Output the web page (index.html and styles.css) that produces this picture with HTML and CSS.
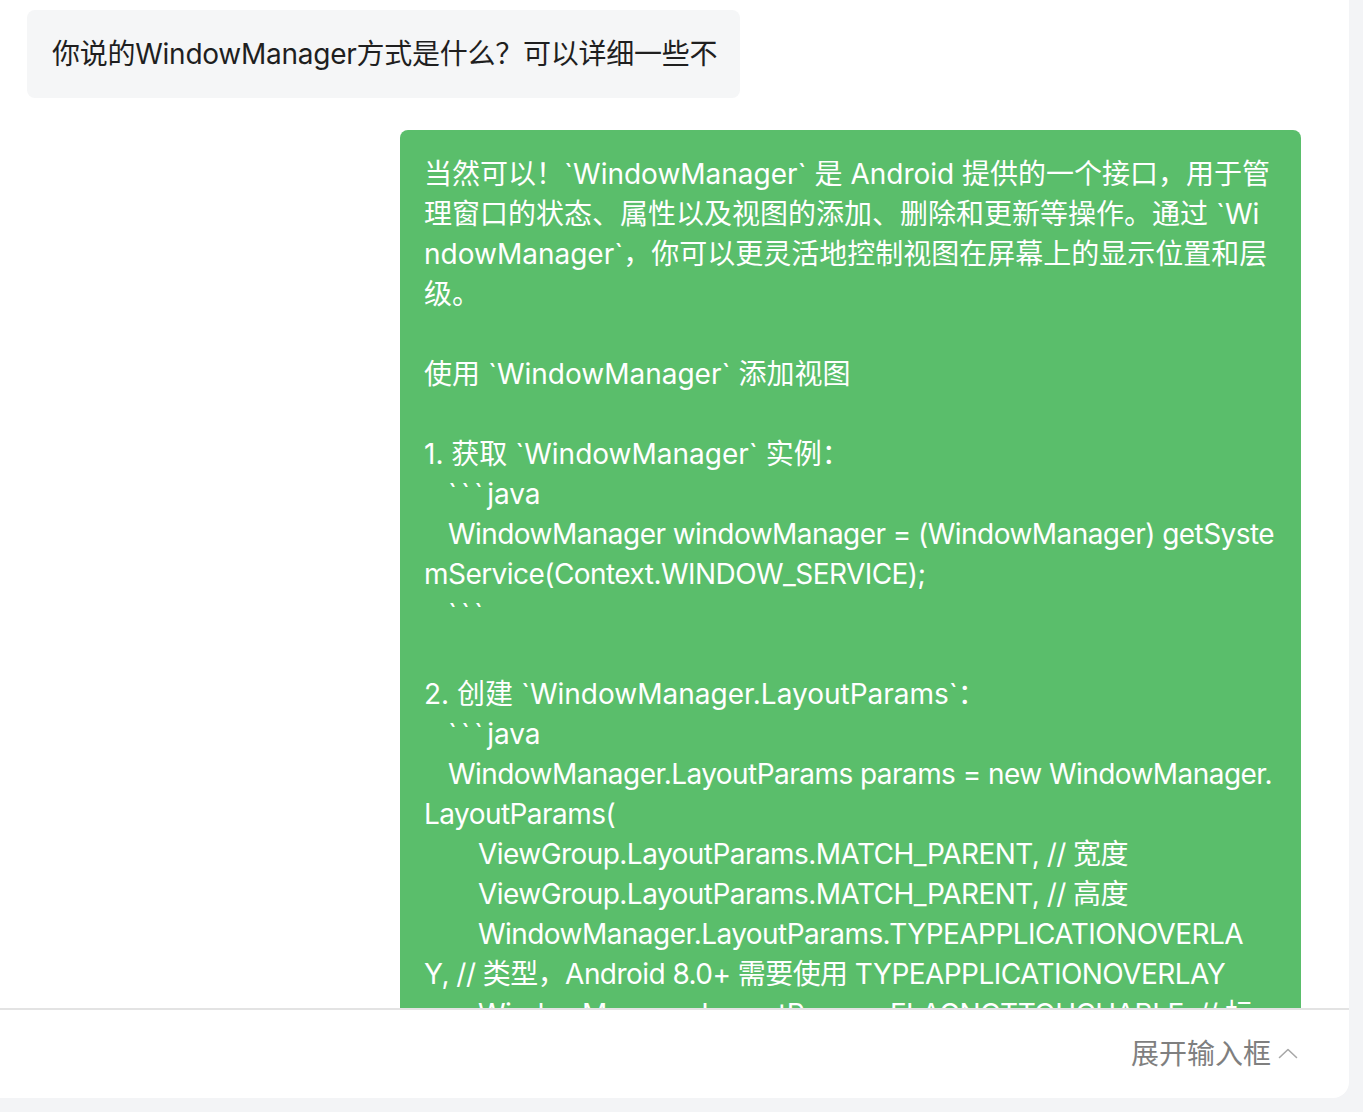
FILE: index.html
```html
<!DOCTYPE html>
<html lang="zh-CN">
<head>
<meta charset="utf-8">
<title>Chat</title>
<link rel="stylesheet" href="styles.css">
</head>
<body>
<div class="panel">
  <div class="messages">
    <div class="bubble user">你说的WindowManager方式是什么？可以详细一些不</div>
    <div class="bubble bot">
      <div class="ln">当然可以！`WindowManager` 是 Android 提供的一个接口，用于管</div>
      <div class="ln">理窗口的状态、属性以及视图的添加、删除和更新等操作。通过 `Wi</div>
      <div class="ln">ndowManager`，你可以更灵活地控制视图在屏幕上的显示位置和层</div>
      <div class="ln">级。</div>
      <div class="ln"> </div>
      <div class="ln">使用 `WindowManager` 添加视图</div>
      <div class="ln"> </div>
      <div class="ln">1. 获取 `WindowManager` 实例：</div>
      <div class="ln i1"><span class="tick">```</span>java</div>
      <div class="ln i1 c">WindowManager windowManager = (WindowManager) getSyste</div>
      <div class="ln c">mService(Context.WINDOW_SERVICE);</div>
      <div class="ln i1"><span class="tick">```</span></div>
      <div class="ln"> </div>
      <div class="ln">2. 创建 `WindowManager.LayoutParams`：</div>
      <div class="ln i1"><span class="tick">```</span>java</div>
      <div class="ln i1 c">WindowManager.LayoutParams params = new WindowManager.</div>
      <div class="ln c">LayoutParams(</div>
      <div class="ln i2 c">ViewGroup.LayoutParams.MATCH_PARENT, // 宽度</div>
      <div class="ln i2 c">ViewGroup.LayoutParams.MATCH_PARENT, // 高度</div>
      <div class="ln i2 c">WindowManager.LayoutParams.TYPEAPPLICATIONOVERLA</div>
      <div class="ln c">Y, // 类型，Android 8.0+ 需要使用 TYPEAPPLICATIONOVERLAY</div>
      <div class="ln i2 c">WindowManager.LayoutParams.FLAGNOTTOUCHABLE, // 标</div>
    </div>
  </div>
  <div class="footer">
    <span class="expand">展开输入框</span>
    <svg class="chev" width="20" height="12" viewBox="0 0 20 12"><path d="M1.5 10.5 L10 2.5 L18.5 10.5" fill="none" stroke="#a8a8a8" stroke-width="1.6" stroke-linecap="round" stroke-linejoin="round"/></svg>
  </div>
</div>
</body>
</html>
```

FILE: styles.css
```css
html, body {
  margin: 0;
  padding: 0;
}
body {
  background: #f3f4f6;
  font-family: Inter, "Noto Sans CJK SC", sans-serif;
  font-size: 28px;
  width: 1363px;
  height: 1112px;
  overflow: hidden;
}
.panel {
  width: 1349px;
  height: 1098px;
  background: #ffffff;
  border-bottom-right-radius: 16px;
  display: flex;
  flex-direction: column;
  overflow: hidden;
}
.messages {
  flex: 1;
  min-height: 0;
  overflow: hidden;
  padding: 10px 48px 0 27px;
  display: flex;
  flex-direction: column;
  gap: 32px;
}
.bubble {
  line-height: 40px;
  border-radius: 8px;
}
.user {
  align-self: flex-start;
  background: #f5f6f7;
  color: #1f1f1f;
  padding: 24px 24px 24px 25px;
  width: 664px;
  white-space: nowrap;
  letter-spacing: -0.25px;
}
.bot {
  align-self: flex-end;
  background: #5abe6b;
  color: #ffffff;
  padding: 24px 24px;
  width: 853px;
  flex-shrink: 0;
}
.ln {
  height: 40px;
  white-space: pre;
}
.c {
  letter-spacing: -0.55px;
}
.tick {
  letter-spacing: 4px;
}
.i1 {
  padding-left: 24px;
}
.i2 {
  padding-left: 54px;
}
.footer {
  flex: 0 0 auto;
  height: 88px;
  border-top: 2px solid #e3e3e3;
  display: flex;
  justify-content: flex-end;
  align-items: center;
  padding-right: 51px;
  gap: 7px;
}
.expand {
  color: #7f7f7f;
  font-size: 28px;
  line-height: 40px;
}
.chev {
  display: block;
  margin-top: -2px;
}
```
